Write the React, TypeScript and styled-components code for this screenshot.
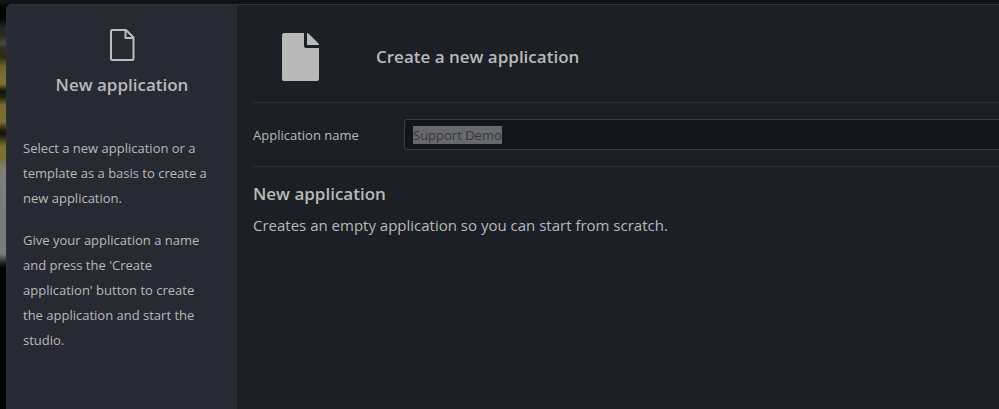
import React, { useEffect, useRef } from "react";
import styled, { createGlobalStyle } from "styled-components";

const GlobalStyle = createGlobalStyle`
  *, *::before, *::after { box-sizing: border-box; }
  body {
    margin: 0;
    overflow: hidden;
    background: #000;
    color: #b9b9b9;
    font-family: "Segoe UI", "Open Sans", "Noto Sans", sans-serif;
    font-size: 13px;
  }
  h1, h2, p { margin: 0; }
`;

const Backdrop = styled.div`
  min-height: 100vh;
  padding: 4px 0 0 6px;
  background:
    linear-gradient(#101216, #101216) 0 0 / 100% 4px no-repeat,
    linear-gradient(
      180deg,
      #101216 0, #030303 10px, #030303 18px, #232323 27px, #2b2b29 36px,
      #48473e 43px, #2e2b18 50px, #2e2a14 57px, #6a6228 66px, #7a7030 78px,
      #7a7030 84px, #14130c 91px, #211f10 97px, #756b2c 105px, #7a7030 122px,
      #29260f 129px, #12110b 134px, #3a3618 139px, #7a7030 146px, #7a7030 158px,
      #7c7a6a 166px, #7d7d7d 172px, #7b7b7b 254px, #2a2a2a 262px,
      #000 268px, #000 100%
    ) 0 0 / 6px 100% no-repeat,
    #000;
`;

const Dialog = styled.section`
  display: grid;
  grid-template-columns: 230px minmax(0, 1fr);
  min-height: calc(100vh - 4px);
  border: solid #2a313c;
  border-width: 1px 0 0 1px;
  border-radius: 5px 0 0 0;
  overflow: hidden;
  background: #1c1f26;
`;

const Sidebar = styled.aside`
  padding: 23px 24px 24px 16px;
  background: #272a33;
`;

const SidebarHeader = styled.header`
  display: flex;
  flex-direction: column;
  align-items: center;
  gap: 10px;
  margin: 0 -8px 39px 0;
`;

const Heading = styled.h2`
  font-size: 17px;
  line-height: 25px;
  font-weight: 600;
`;

const Help = styled.p`
  line-height: 25px;
  & + & { margin-top: 17px; }
`;

const Main = styled.main`
  padding-left: 16px;
`;

const Banner = styled.header`
  display: flex;
  align-items: center;
  height: 98px;
  padding: 6px 29px 0;
  gap: 57px;
  border-bottom: 1px solid #2b2f38;
`;

const Field = styled.div`
  display: flex;
  align-items: center;
  padding: 16px 0;
  border-bottom: 1px solid #2b2f38;
`;

const Label = styled.label`
  flex: 0 0 151px;
  font-size: 13px;
`;

const TextInput = styled.input`
  flex: 1;
  min-width: 0;
  height: 31px;
  padding: 0 8px;
  border: 1px solid #3a3c42;
  border-right: 0;
  border-radius: 3px 0 0 3px;
  outline: 0;
  background: #12151c;
  color: #b9b9b9;
  font: inherit;
  &::selection { background: #68696d; color: #36383c; }
`;

const Description = styled.section`
  padding-top: 14px;
`;

const Summary = styled.p`
  margin-top: 7px;
  font-size: 15px;
  line-height: 25px;
`;

const FileOutline = () => (
  <svg width="26" height="34" viewBox="0 0 26 34" fill="none" stroke="#bdbdbd" strokeWidth="2" strokeLinejoin="round" aria-hidden="true">
    <path d="M3 2H17L24.500 9.500V30.500A1.500 1.500 0 0 1 23 32H3.500A1.500 1.500 0 0 1 2 30.500V3.500A1.500 1.500 0 0 1 3.500 2Z" />
    <path d="M16.500 2V10H24.500" />
  </svg>
);

const FileSolid = () => (
  <svg width="37" height="48" viewBox="0 0 37 48" fill="#b9b9b9" aria-hidden="true">
    <path d="M2 0H22V13Q22 15 24 15H37V46Q37 48 35 48H2Q0 48 0 46V2Q0 0 2 0Z" />
    <path d="M25 0Q26 0 27 1L36 10Q37 11 37 12H25Z" />
  </svg>
);

export default function App() {
  const nameInput = useRef<HTMLInputElement>(null);

  useEffect(() => {
    nameInput.current?.focus();
    nameInput.current?.select();
  }, []);

  return (
    <>
      <GlobalStyle />
      <Backdrop>
        <Dialog role="dialog" aria-labelledby="dialog-title">
          <Sidebar>
            <SidebarHeader>
              <FileOutline />
              <Heading>New application</Heading>
            </SidebarHeader>
            <Help>Select a new application or a template as a basis to create a new application.</Help>
            <Help>Give your application a name and press the 'Create application' button to create the application and start the studio.</Help>
          </Sidebar>
          <Main>
            <Banner>
              <FileSolid />
              <Heading as="h1" id="dialog-title">Create a new application</Heading>
            </Banner>
            <Field>
              <Label htmlFor="application-name">Application name</Label>
              <TextInput ref={nameInput} id="application-name" type="text" defaultValue="Support Demo" />
            </Field>
            <Description>
              <Heading>New application</Heading>
              <Summary>Creates an empty application so you can start from scratch.</Summary>
            </Description>
          </Main>
        </Dialog>
      </Backdrop>
    </>
  );
}
